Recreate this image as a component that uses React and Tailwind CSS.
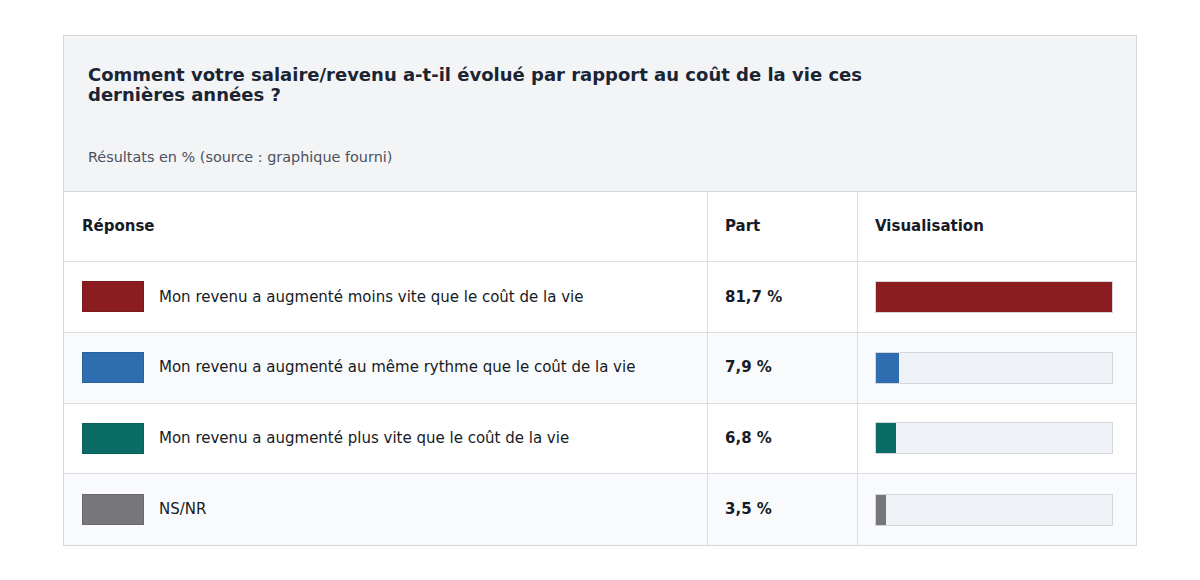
const ROWS = [
  { label: 'Mon revenu a augmenté moins vite que le coût de la vie', value: 81.7, color: 'bg-[#8b1c1f]' },
  { label: 'Mon revenu a augmenté au même rythme que le coût de la vie', value: 7.9, color: 'bg-[#2e6db0]' },
  { label: 'Mon revenu a augmenté plus vite que le coût de la vie', value: 6.8, color: 'bg-[#0b6b66]' },
  { label: 'NS/NR', value: 3.5, color: 'bg-[#77777b]' },
];

const fmt = (v) => `${v.toFixed(1).replace('.', ',')} %`;

export default function App() {
  const max = 81.7;
  return (
    <div className="min-h-screen bg-white pt-[35px] px-[63px]" style={{ fontFamily: '"DejaVu Sans", sans-serif' }}>
      <div className="border border-[#d4d6dc] bg-white">
        {/* en-tête */}
        <div className="bg-[#f3f4f6] px-6 pt-[29px] pb-6 border-b border-[#d4d6dc]">
          <h1 className="text-[18px] leading-[20px] font-bold text-[#1b2433] max-w-[800px]">
            Comment votre salaire/revenu a-t-il évolué par rapport au coût de la vie ces dernières années ?
          </h1>
          <p className="mt-[42px] text-[14.4px] leading-[20px] text-[#4b5160]">
            Résultats en % (source : graphique fourni)
          </p>
        </div>

        {/* tableau */}
        <div className="grid grid-cols-[644px_150px_1fr] text-[15px] text-[#161b26]">
          <div className="h-[70px] flex items-center px-[18px] font-bold border-r border-b border-[#dcdee3]">Réponse</div>
          <div className="h-[70px] flex items-center px-[17px] font-bold border-r border-b border-[#dcdee3]">Part</div>
          <div className="h-[70px] flex items-center px-[17px] font-bold border-b border-[#dcdee3]">Visualisation</div>
          {ROWS.map((r, i) => {
            const bg = i % 2 === 1 ? 'bg-[#f9fafb]' : 'bg-white';
            const last = i === ROWS.length - 1;
            const bb = last ? '' : 'border-b';
            return [
              <div key={r.label + 'a'} className={`h-[70.75px] flex items-center gap-[15px] px-[18px] border-r ${bb} border-[#dcdee3] ${bg}`}>
                <span className={`w-[62px] h-[31px] shrink-0 border border-black/10 ${r.color}`} />
                <span>{r.label}</span>
              </div>,
              <div key={r.label + 'b'} className={`h-[70.75px] flex items-center px-[17px] font-bold border-r ${bb} border-[#dcdee3] ${bg}`}>
                {fmt(r.value)}
              </div>,
              <div key={r.label + 'c'} className={`h-[70.75px] flex items-center px-[17px] ${bb} border-[#dcdee3] ${bg}`}>
                <div className="w-[238px] h-[32px] bg-[#eef1f5] border border-[#d4d6dc] flex">
                  <div className={`h-full ${r.color}`} style={{ width: `${(r.value / max) * 100}%` }} />
                </div>
              </div>,
            ];
          })}
        </div>
      </div>
    </div>
  );
}
